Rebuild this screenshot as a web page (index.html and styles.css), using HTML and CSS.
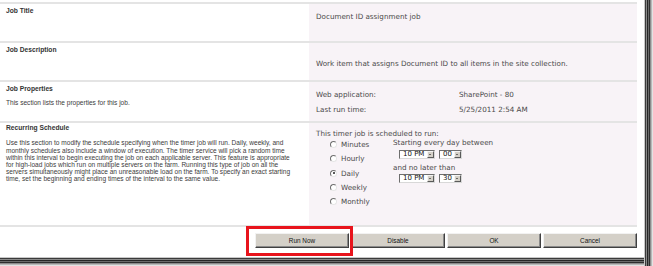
FILE: index.html
```html
<!DOCTYPE html>
<html>
<head>
<meta charset="utf-8">
<link rel="stylesheet" href="styles.css">
</head>
<body>
<div class="frame">
  <div class="shot">
    <div class="form">
      <section class="row r1">
        <div class="desc"><h3>Job Title</h3></div>
        <div class="ctrl"><div class="val">Document ID assignment job</div></div>
      </section>
      <section class="row r2">
        <div class="desc"><h3>Job Description</h3></div>
        <div class="ctrl"><div class="val">Work item that assigns Document ID to all items in the site collection.</div></div>
      </section>
      <section class="row r3">
        <div class="desc"><h3>Job Properties</h3><p>This section lists the properties for this job.</p></div>
        <div class="ctrl">
          <div class="props">
            <span>Web application:</span><span>SharePoint - 80</span>
            <span>Last run time:</span><span>5/25/2011 2:54 AM</span>
          </div>
        </div>
      </section>
      <section class="row r4">
        <div class="desc"><h3>Recurring Schedule</h3>
          <p>Use this section to modify the schedule specifying when the timer job will run. Daily, weekly, and<br>monthly schedules also include a window of execution. The timer service will pick a random time<br>within this interval to begin executing the job on each applicable server. This feature is appropriate<br>for high-load jobs which run on multiple servers on the farm. Running this type of job on all the<br>servers simultaneously might place an unreasonable load on the farm. To specify an exact starting<br>time, set the beginning and ending times of the interval to the same value.</p>
        </div>
        <div class="ctrl">
          <div class="val sched">This timer job is scheduled to run:</div>
          <div class="sched-body">
            <div class="radios">
              <div class="opt"><span class="radio"></span>Minutes</div>
              <div class="opt"><span class="radio"></span>Hourly</div>
              <div class="opt"><span class="radio on"></span>Daily</div>
              <div class="opt"><span class="radio"></span>Weekly</div>
              <div class="opt"><span class="radio"></span>Monthly</div>
            </div>
            <div class="times">
              <div class="tl">Starting every day between</div>
              <div class="sel-row s1">
                <span class="sel w1"><span class="st">10 PM</span><span class="arr"></span></span>
                <span class="sel w2"><span class="st">00</span><span class="arr"></span></span>
              </div>
              <div class="tl t2">and no later than</div>
              <div class="sel-row s2">
                <span class="sel w1"><span class="st">10 PM</span><span class="arr"></span></span>
                <span class="sel w2"><span class="st">30</span><span class="arr"></span></span>
              </div>
            </div>
          </div>
        </div>
      </section>
    </div>
    <div class="buttons">
      <button class="btn">Run Now</button>
      <button class="btn">Disable</button>
      <button class="btn">OK</button>
      <button class="btn">Cancel</button>
    </div>
    <div class="highlight"></div>
  </div>
</div>
</body>
</html>
```

FILE: styles.css
```css
* { box-sizing: border-box; margin: 0; padding: 0; }
html, body { width: 653px; height: 266px; overflow: hidden; background: #fff; }

.frame {
  width: 653px;
  height: 266px;
  background:
    linear-gradient(to right, #c8c8c8 0 1px, #3a3a3a 1px 2px, #8a8a8a 2px 3px, #262626 3px 4px, #6a6a6a 4px 5px, #2e2e2e 5px 6px, #8c8c8c 6px 7px, #b8b8b8 7px 8px, #e2e2e2 8px 9px) right top / 9px 100% no-repeat,
    linear-gradient(to bottom, #c8c8c8 0 1px, #3a3a3a 1px 2px, #8a8a8a 2px 3px, #262626 3px 4px, #6a6a6a 4px 5px, #2e2e2e 5px 6px, #8c8c8c 6px 7px, #b8b8b8 7px 8px, #e2e2e2 8px 9px) left bottom / 100% 9px no-repeat,
    #fff;
}
.shot {
  position: relative;
  width: 644px;
  height: 257px;
  background: #fff;
}

.form {
  width: 637px;
  padding-top: 2px;
  border-bottom: 2px solid #e4e4e4;
  font-family: "Liberation Sans", Arial, sans-serif;
}
.row {
  display: grid;
  grid-template-columns: 309px 328px;
  border-top: 2px solid #e4e4e4;
}
.r1 { height: 39px; }
.r2 { height: 39px; }
.r3 { height: 41px; }
.r4 { height: 104px; }

.desc { padding: 3px 0 0 6px; color: #3a3a3a; }
.desc h3 { font-size: 6.7px; line-height: 8px; font-weight: bold; color: #333; }
.desc p { font-size: 6.55px; line-height: 7.2px; margin-top: 6px; color: #3c3c3c; white-space: nowrap; }
.r4 .desc { padding-top: 1px; }
.r4 .desc p { margin-top: 7.4px; }

.ctrl {
  background: #f8f3f7;
  padding-left: 7px;
  font-family: "DejaVu Sans", Verdana, sans-serif;
  font-size: 7.2px;
  color: #4a4a4a;
}
.val { line-height: 9px; white-space: nowrap; }
.r1 .ctrl { padding-top: 8px; }
.r2 .ctrl { padding-top: 16px; }
.r3 .ctrl { padding-top: 8px; }
.r4 .ctrl { padding-top: 5.5px; }

.props {
  display: grid;
  grid-template-columns: 143px auto;
  grid-auto-rows: 15px;
  line-height: 9px;
}

.sched-body { display: flex; }
.radios { margin-left: 14px; width: 63px; }
.opt {
  display: flex;
  align-items: center;
  height: 14.3px;
  gap: 4px;
}
.radio {
  width: 7px;
  height: 7px;
  border-radius: 50%;
  border: 1px solid;
  border-color: #6e6e6e #e6e6e6 #e6e6e6 #6e6e6e;
  background: #fff;
  position: relative;
  flex: none;
}
.radio.on::after {
  content: "";
  position: absolute;
  left: 1.5px;
  top: 1.5px;
  width: 2px;
  height: 2px;
  border-radius: 50%;
  background: #222;
}

.times { display: flex; flex-direction: column; }
.tl { line-height: 9px; white-space: nowrap; }
.t2 { margin-top: 4px; }
.sel-row { display: flex; gap: 4px; margin-left: 6px; height: 9px; }
.s1 { margin-top: 3px; }
.s2 { margin-top: 2.5px; }
.sel {
  display: flex;
  align-items: center;
  justify-content: space-between;
  height: 9px;
  background: #fff;
  border: 1px solid;
  border-color: #6e6e6e #d8d8d8 #d8d8d8 #6e6e6e;
  color: #111;
  font-size: 7px;
}
.w1 { width: 36px; }
.w2 { width: 23px; }
.st { padding-left: 3px; line-height: 7px; }
.arr {
  position: relative;
  width: 7px;
  height: 7px;
  background: #d4d0c8;
  border: 1px solid;
  border-color: #f4f4f4 #5a5a5a #5a5a5a #f4f4f4;
}
.arr::after {
  content: "";
  position: absolute;
  left: 1px;
  top: 2px;
  border-left: 1.5px solid transparent;
  border-right: 1.5px solid transparent;
  border-top: 1.5px solid #000;
}

.buttons {
  display: flex;
  justify-content: flex-end;
  gap: 2px;
  width: 637px;
  margin-top: 6px;
}
.btn {
  width: 94px;
  height: 15px;
  background: #d4d0c8;
  border: 1px solid;
  border-color: #f2f2f2 #404040 #404040 #f2f2f2;
  box-shadow: inset -1px -1px 0 #8a8a8a;
  font-family: "Liberation Sans", Arial, sans-serif;
  font-size: 6.4px;
  color: #111;
  line-height: 11px;
}

.highlight {
  position: absolute;
  left: 246px;
  top: 226px;
  width: 107px;
  height: 30px;
  border: 3px solid #e8141c;
}
```
